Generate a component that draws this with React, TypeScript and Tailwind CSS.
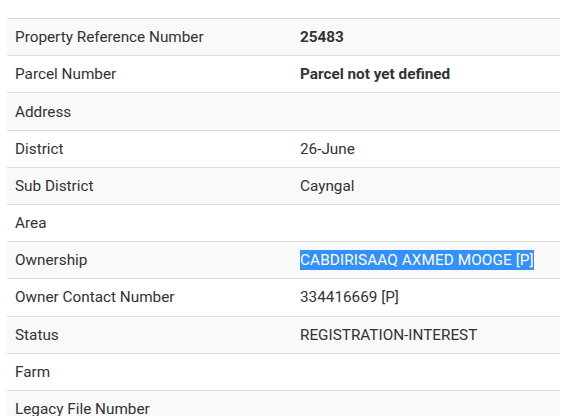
const rows: { label: string; value?: string; bold?: boolean; selected?: boolean }[] = [
  { label: "Property Reference Number", value: "25483", bold: true },
  { label: "Parcel Number", value: "Parcel not yet defined", bold: true },
  { label: "Address" },
  { label: "District", value: "26-June" },
  { label: "Sub District", value: "Cayngal" },
  { label: "Area" },
  { label: "Ownership", value: "CABDIRISAAQ AXMED MOOGE [P]", selected: true },
  { label: "Owner Contact Number", value: "334416669 [P]" },
  { label: "Status", value: "REGISTRATION-INTEREST" },
  { label: "Farm" },
  { label: "Legacy File Number" },
];

export default function App() {
  return (
    <div className="w-[561px] h-[416px] overflow-hidden bg-white pt-[18px] pl-[7px] pr-px font-['Roboto',sans-serif] text-[15.3px] text-[#333]">
      <div className="flex flex-col">
        {rows.map((row, i) => (
          <div
            key={row.label}
            className={`flex items-center h-[37.2px] shrink-0 border-t border-[#ddd] pt-px ${
              i % 2 === 0 ? "bg-[#f9f9f9]" : "bg-white"
            }`}
          >
            <div className="w-[285px] px-2">{row.label}</div>
            <div className={`flex-1 px-2 ${row.bold ? "font-bold" : ""}`}>
              {row.selected ? (
                <span className="bg-[#3390fd] text-white py-[1px] tracking-[0.1px]">{row.value}</span>
              ) : (
                row.value
              )}
            </div>
          </div>
        ))}
      </div>
    </div>
  );
}
